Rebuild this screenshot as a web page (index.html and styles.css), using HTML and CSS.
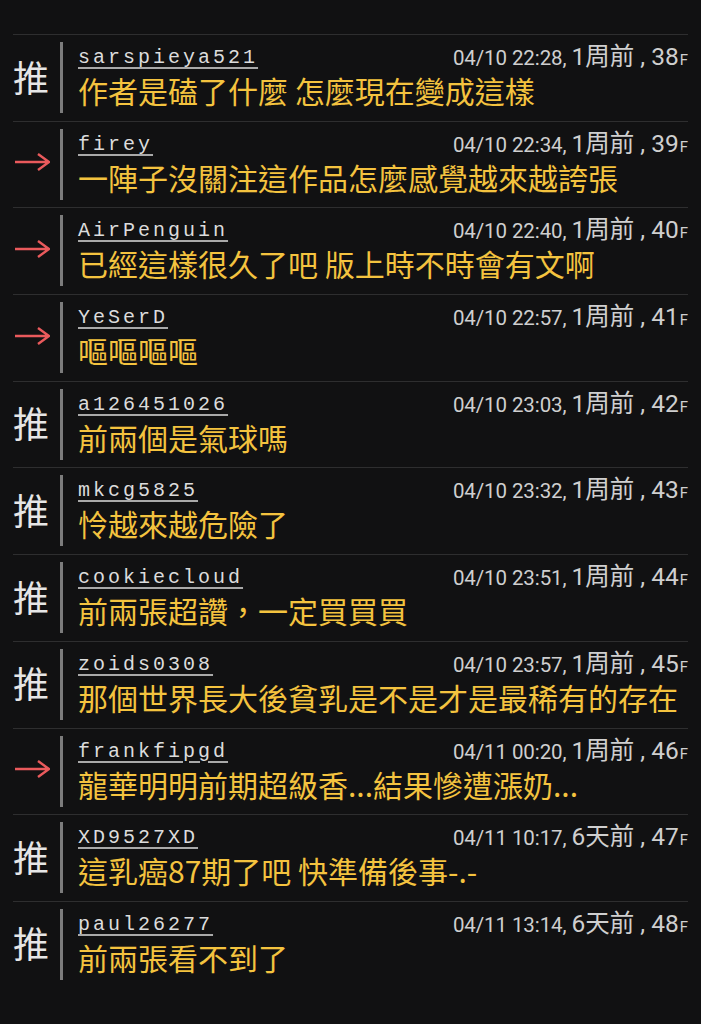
FILE: index.html
```html
<!DOCTYPE html>
<html lang="zh-Hant">
<head>
<meta charset="utf-8">
<title>推文</title>
<link rel="stylesheet" href="styles.css">
</head>
<body>
<div class="list">
  <div class="row">
    <div class="mark"><span class="push">推</span></div>
    <div class="body">
      <div class="head"><span class="user">sarspieya521</span><span class="meta"><span class="date">04/10 22:28, </span><span class="ago">1周前 , 38</span><span class="fl">F</span></span></div>
      <div class="text">作者是磕了什麼 怎麼現在變成這樣</div>
    </div>
  </div>
  <div class="row">
    <div class="mark"><svg class="arrow" width="36" height="18" viewBox="0 0 36 18"><path d="M1 9H34.5M24 1L35 9L24 17"/></svg></div>
    <div class="body">
      <div class="head"><span class="user">firey</span><span class="meta"><span class="date">04/10 22:34, </span><span class="ago">1周前 , 39</span><span class="fl">F</span></span></div>
      <div class="text">一陣子沒關注這作品怎麼感覺越來越誇張</div>
    </div>
  </div>
  <div class="row">
    <div class="mark"><svg class="arrow" width="36" height="18" viewBox="0 0 36 18"><path d="M1 9H34.5M24 1L35 9L24 17"/></svg></div>
    <div class="body">
      <div class="head"><span class="user">AirPenguin</span><span class="meta"><span class="date">04/10 22:40, </span><span class="ago">1周前 , 40</span><span class="fl">F</span></span></div>
      <div class="text">已經這樣很久了吧 版上時不時會有文啊</div>
    </div>
  </div>
  <div class="row">
    <div class="mark"><svg class="arrow" width="36" height="18" viewBox="0 0 36 18"><path d="M1 9H34.5M24 1L35 9L24 17"/></svg></div>
    <div class="body">
      <div class="head"><span class="user">YeSerD</span><span class="meta"><span class="date">04/10 22:57, </span><span class="ago">1周前 , 41</span><span class="fl">F</span></span></div>
      <div class="text">嘔嘔嘔嘔</div>
    </div>
  </div>
  <div class="row">
    <div class="mark"><span class="push">推</span></div>
    <div class="body">
      <div class="head"><span class="user">a126451026</span><span class="meta"><span class="date">04/10 23:03, </span><span class="ago">1周前 , 42</span><span class="fl">F</span></span></div>
      <div class="text">前兩個是氣球嗎</div>
    </div>
  </div>
  <div class="row">
    <div class="mark"><span class="push">推</span></div>
    <div class="body">
      <div class="head"><span class="user">mkcg5825</span><span class="meta"><span class="date">04/10 23:32, </span><span class="ago">1周前 , 43</span><span class="fl">F</span></span></div>
      <div class="text">怜越來越危險了</div>
    </div>
  </div>
  <div class="row">
    <div class="mark"><span class="push">推</span></div>
    <div class="body">
      <div class="head"><span class="user">cookiecloud</span><span class="meta"><span class="date">04/10 23:51, </span><span class="ago">1周前 , 44</span><span class="fl">F</span></span></div>
      <div class="text">前兩張超讚，一定買買買</div>
    </div>
  </div>
  <div class="row">
    <div class="mark"><span class="push">推</span></div>
    <div class="body">
      <div class="head"><span class="user">zoids0308</span><span class="meta"><span class="date">04/10 23:57, </span><span class="ago">1周前 , 45</span><span class="fl">F</span></span></div>
      <div class="text">那個世界長大後貧乳是不是才是最稀有的存在</div>
    </div>
  </div>
  <div class="row">
    <div class="mark"><svg class="arrow" width="36" height="18" viewBox="0 0 36 18"><path d="M1 9H34.5M24 1L35 9L24 17"/></svg></div>
    <div class="body">
      <div class="head"><span class="user">frankfipgd</span><span class="meta"><span class="date">04/11 00:20, </span><span class="ago">1周前 , 46</span><span class="fl">F</span></span></div>
      <div class="text">龍華明明前期超級香...結果慘遭漲奶...</div>
    </div>
  </div>
  <div class="row">
    <div class="mark"><span class="push">推</span></div>
    <div class="body">
      <div class="head"><span class="user">XD9527XD</span><span class="meta"><span class="date">04/11 10:17, </span><span class="ago">6天前 , 47</span><span class="fl">F</span></span></div>
      <div class="text">這乳癌87期了吧 快準備後事-.-</div>
    </div>
  </div>
  <div class="row">
    <div class="mark"><span class="push">推</span></div>
    <div class="body">
      <div class="head"><span class="user">paul26277</span><span class="meta"><span class="date">04/11 13:14, </span><span class="ago">6天前 , 48</span><span class="fl">F</span></span></div>
      <div class="text">前兩張看不到了</div>
    </div>
  </div>
</div>
</body>
</html>
```
FILE: styles.css
```css
html, body {
  margin: 0;
  padding: 0;
  background: #111112;
}
body {
  width: 701px;
  height: 1024px;
  overflow: hidden;
  font-family: Roboto, "Noto Sans CJK TC", sans-serif;
}
.list {
  padding: 34px 13px 0 13px;
}
.row {
  display: flex;
  border-top: 1px solid #2e2e2f;
  padding: 7px 0 7.7px 0;
}
.mark {
  width: 47px;
  flex: none;
  display: flex;
  align-items: center;
  padding-bottom: 4px;
}
.push {
  font-family: "Noto Sans CJK TC", sans-serif;
  font-size: 36px;
  line-height: 40px;
  color: #e6e6e6;
}
.arrow {
  display: block;
  margin-left: 1px;
}
.arrow path {
  fill: none;
  stroke: #ea5a5c;
  stroke-width: 2.4;
}
.body {
  flex: 1;
  min-width: 0;
  border-left: 3px solid #7c7c7c;
  padding: 0 0 7px 15px;
}
.head {
  display: flex;
  justify-content: space-between;
  align-items: flex-start;
  height: 30px;
}
.user {
  margin-top: 4px;
  font-family: "Liberation Mono", monospace;
  font-size: 20px;
  line-height: 24px;
  letter-spacing: 3px;
  color: #dcdcdc;
  text-decoration: underline;
  text-decoration-color: #a9a9a9;
  text-decoration-thickness: 2px;
  text-underline-offset: 4px;
  white-space: nowrap;
}
.meta {
  margin-top: 2px;
  line-height: 26px;
  color: #cfcfcf;
  white-space: nowrap;
}
.date {
  font-size: 20.5px;
  letter-spacing: -0.1px;
}
.ago {
  font-size: 24.5px;
}
.fl {
  font-size: 15px;
  margin-left: 1px;
}
.text {
  margin-top: 2px;
  font-family: "Noto Sans CJK TC", sans-serif;
  font-size: 30px;
  line-height: 32px;
  color: #f4c33f;
  white-space: nowrap;
}
```
